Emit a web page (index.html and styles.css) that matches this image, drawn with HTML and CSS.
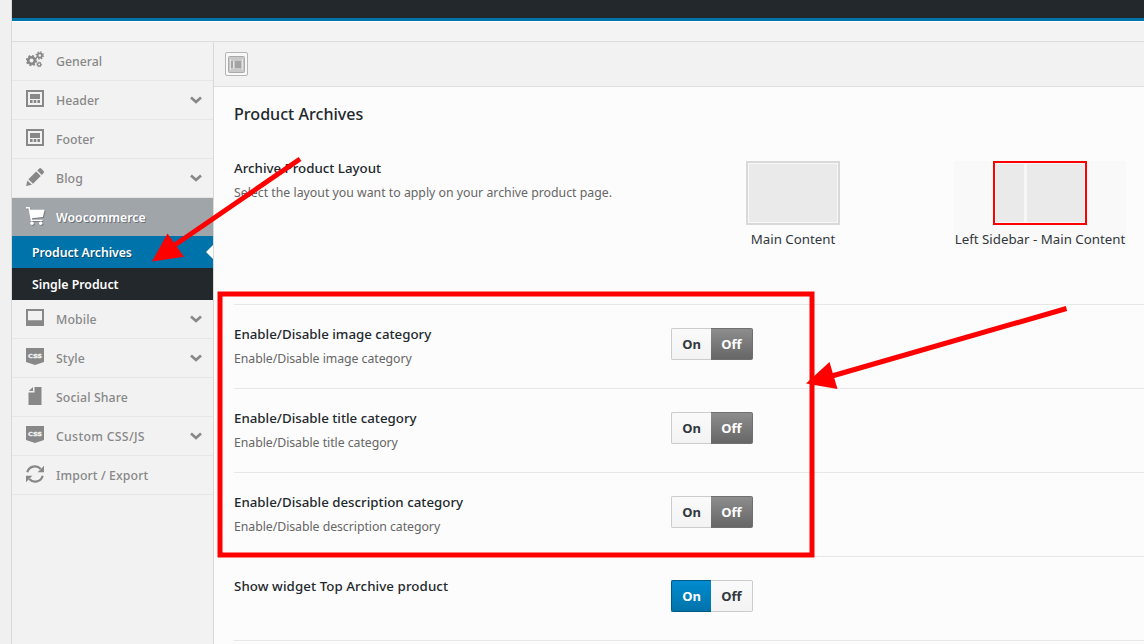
FILE: index.html
```html
<!DOCTYPE html>
<html lang="en">
<head>
<meta charset="utf-8">
<title>Theme Options</title>
<link rel="stylesheet" href="styles.css">
</head>
<body>
<svg class="defs" width="0" height="0" aria-hidden="true">
  <symbol id="i-gears" viewBox="0 0 18 18">
    <g fill="none" stroke="currentColor">
      <circle cx="5.5" cy="9.6" r="3.3" stroke-width="2.6"/>
      <circle cx="5.5" cy="9.6" r="4.8" stroke-width="1.8" stroke-dasharray="1.89 1.88"/>
      <circle cx="13.8" cy="4.500" r="2.200" stroke-width="1.800"/>
      <circle cx="13.8" cy="4.500" r="3.5" stroke-width="1.5" stroke-dasharray="1.38 1.37"/>
      <circle cx="13.2" cy="13.4" r="1.6" stroke-width="1.3"/>
      <circle cx="13.2" cy="13.4" r="2.4" stroke-width="1" stroke-dasharray=".95 .93"/>
    </g>
  </symbol>
  <symbol id="i-layout" viewBox="0 0 18 18">
    <path fill="currentColor" fill-rule="evenodd" d="M0 0h18v17H0zM2 2v13h14V2zM4 4h10v5H4zM4 10h2.6v3H4zM7.7 10h2.6v3H7.7zM11.4 10H14v3h-2.6z"/>
  </symbol>
  <symbol id="i-pencil" viewBox="0 0 18 18">
    <path fill="currentColor" d="M0 18l1.4-5.6 4.5 4.4zM2.400 11.200l7.800-7.800 4.600 4.600-7.800 7.800zM11.300 2.400L13.200.5q1-.8 2 0l2.400 2.400q.8 1 0 2l-1.800 2z"/>
  </symbol>
  <symbol id="i-cart" viewBox="0 0 20 19">
    <path fill="currentColor" d="M0 0h3.600l.9 2.800H18.600l-1.700 7.100L6 11.300l.3 1.400H16.500v1.400H4.900L2.500 1.500H0z"/>
    <circle cx="6" cy="16.300" r="1.700" fill="currentColor"/><circle cx="14.700" cy="16.300" r="1.700" fill="currentColor"/>
  </symbol>
  <symbol id="i-screen" viewBox="0 0 18 18">
    <path fill="currentColor" fill-rule="evenodd" d="M0 0h18v17H0zM2 2v9.300h14V2z"/>
  </symbol>
  <symbol id="i-file" viewBox="0 0 18 18">
    <path fill="currentColor" d="M8.500 0H15.500v18h-13V5.500h6zM7 0v4H2.800z"/>
  </symbol>
  <symbol id="i-refresh" viewBox="0 0 18 18">
    <g fill="none" stroke="currentColor" stroke-width="2.200"><path d="M1.300 7.200A7.800 7.800 0 0 1 14.700 4"/><path d="M16.700 10.800A7.800 7.800 0 0 1 3.300 14"/></g>
    <path fill="currentColor" d="M18 .8V7.300h-6.500l2.200-2zM0 17.200V10.700h6.500l-2.200 2z"/>
  </symbol>
  <symbol id="i-chevron" viewBox="0 0 12 8">
    <path fill="none" stroke="currentColor" stroke-width="2.700" d="M1 1.500l5 4.500 5-4.500"/>
  </symbol>
</svg>

<div class="page">
  <div class="gutter"></div>
  <div class="panel">
    <header class="topbar"></header>
    <div class="infobar"></div>
    <div class="columns">
      <nav class="sidebar">
        <a class="item"><svg class="icon"><use href="#i-gears"/></svg><span class="label tight">General</span></a>
        <a class="item"><svg class="icon"><use href="#i-layout"/></svg><span class="label tight">Header</span><svg class="chevron"><use href="#i-chevron"/></svg></a>
        <a class="item"><svg class="icon"><use href="#i-layout"/></svg><span class="label tight">Footer</span></a>
        <a class="item"><svg class="icon"><use href="#i-pencil"/></svg><span class="label">Blog</span><svg class="chevron"><use href="#i-chevron"/></svg></a>
        <a class="item current"><svg class="icon cart"><use href="#i-cart"/></svg><span class="label tight">Woocommerce</span></a>
        <a class="sub selected"><span class="tight">Product Archives</span></a>
        <a class="sub"><span>Single Product</span></a>
        <a class="item"><svg class="icon"><use href="#i-screen"/></svg><span class="label">Mobile</span><svg class="chevron"><use href="#i-chevron"/></svg></a>
        <a class="item"><svg class="icon" viewBox="0 0 18 18"><path fill="currentColor" d="M0 0h18v14l-9 3-9-3z"/><text class="css-mark" x="2" y="10" textLength="14" lengthAdjust="spacingAndGlyphs">CSS</text></svg><span class="label">Style</span><svg class="chevron"><use href="#i-chevron"/></svg></a>
        <a class="item"><svg class="icon"><use href="#i-file"/></svg><span class="label">Social Share</span></a>
        <a class="item"><svg class="icon" viewBox="0 0 18 18"><path fill="currentColor" d="M0 0h18v14l-9 3-9-3z"/><text class="css-mark" x="2" y="10" textLength="14" lengthAdjust="spacingAndGlyphs">CSS</text></svg><span class="label wide">Custom CSS/JS</span><svg class="chevron"><use href="#i-chevron"/></svg></a>
        <a class="item"><svg class="icon"><use href="#i-refresh"/></svg><span class="label">Import / Export</span></a>
      </nav>
      <main class="main">
        <div class="toolbar"><button class="expand"><svg width="17" height="17" viewBox="0 0 17 17"><rect x=".5" y=".5" width="16" height="16" rx="1" fill="#c9c9c9" stroke="#aaa"/><path fill="none" stroke="#e3e3e3" d="M2.500 3v11M14.500 3v11M5.500 5v8"/><path fill="#a3a3a3" d="M3 5h2v7H3zM7 5h6v7H7z"/></svg></button></div>
        <section class="content">
          <h2 class="heading">Product Archives</h2>
          <div class="row first">
            <div class="info"><div class="title">Archive Product Layout</div><div class="desc">Select the layout you want to apply on your archive product page.</div></div>
            <div class="choices">
              <div class="choice one"><div class="thumb"><i></i></div><span>Main Content</span></div>
              <div class="choice picked"><div class="thumb"><i class="side"></i><i></i></div><span>Left Sidebar - Main Content</span></div>
            </div>
          </div>
          <div class="row"><div class="info"><div class="title">Enable/Disable image category</div><div class="desc short">Enable/Disable image category</div></div><div class="switch"><span class="on">On</span><span class="off active">Off</span></div></div>
          <div class="row"><div class="info"><div class="title">Enable/Disable title category</div><div class="desc short">Enable/Disable title category</div></div><div class="switch"><span class="on">On</span><span class="off active">Off</span></div></div>
          <div class="row"><div class="info"><div class="title">Enable/Disable description category</div><div class="desc short">Enable/Disable description category</div></div><div class="switch"><span class="on">On</span><span class="off active">Off</span></div></div>
          <div class="row"><div class="info"><div class="title loose">Show widget Top Archive product</div></div><div class="switch"><span class="on active">On</span><span class="off">Off</span></div></div>
          <div class="row"></div>
        </section>
      </main>
    </div>
  </div>
</div>

<svg class="marks" width="1144" height="644" viewBox="0 0 1144 644">
  <rect x="220" y="294" width="592" height="261" fill="none" stroke="#f00" stroke-width="5"/>
  <g stroke="#f00" stroke-width="5"><path d="M300 159L174 245.500"/><path d="M1066.500 308.500L832 376"/></g>
  <path fill="#f00" d="M152 261.500l15.500-28 16.500 23.300zM806 383.500l23.500-21.500 8 27z"/>
</svg>
</body>
</html>
```
FILE: styles.css
```css
* { box-sizing: border-box; }
body { margin: 0; width: 1144px; height: 644px; overflow: hidden; background: #f0f0f0; font-family: "Noto Sans", "Open Sans", sans-serif; font-size: 12.3px; color: #32373c; }
.defs { position: absolute; }
.page { display: flex; height: 644px; overflow: hidden; }
.gutter { flex: 0 0 11px; background: #f0f0f0; }
.panel { flex: 1; min-width: 0; display: flex; flex-direction: column; border-left: 1px solid #d8d8d8; background: #f2f2f2; }
.topbar { height: 21px; flex: none; background: #23282d; border-bottom: 3px solid #0073aa; }
.infobar { height: 21px; flex: none; background: #f3f3f3; border-top: 1px solid #fff; border-bottom: 1px solid #dedede; }
.columns { display: flex; flex: 1; min-height: 0; }

.sidebar { flex: 0 0 201px; background: #f2f2f2; }
.item { display: flex; align-items: center; height: 39px; padding: 0 11px 0 14px; border-bottom: 1px solid #e6e6e6; color: #888; font-weight: 500; }
.icon { width: 18px; height: 18px; margin-right: 12px; margin-top: -2px; flex: none; }
.icon.cart { width: 20px; height: 19px; margin-right: 10px; overflow: visible; filter: drop-shadow(1px 1px 0 #777d82); }
.label { flex: 1; letter-spacing: .1px; }
.label.tight { letter-spacing: 0; }
.label.wide { letter-spacing: .3px; }
.sub .tight { letter-spacing: -.07px; }
.chevron { width: 12px; height: 8px; flex: none; }
.css-mark { font: bold 5.500px "DejaVu Sans", sans-serif; fill: #f4f4f4; stroke: #f4f4f4; stroke-width: .3px; }
.current { height: 38px; border-bottom: 0; background: #a0a5aa; color: #fff; font-weight: 600; text-shadow: 1px 1px 0 #6d7175; }
.sub { display: flex; align-items: center; justify-content: space-between; height: 32px; padding-left: 20px; background: #23282d; color: #fff; font-weight: 600; }
.selected { background: #0073aa; text-shadow: 1px 1px 0 #004b70; }
.selected::after { content: ""; border: 7px solid transparent; border-left-width: 0; border-right-color: #fcfcfc; }

.main { flex: 1; min-width: 0; border-left: 1px solid #d8d8d8; background: #fcfcfc; }
.toolbar { display: flex; align-items: flex-start; height: 45px; padding: 10px 11px; background: #f2f2f2; border-bottom: 1px solid #dedede; }
.expand { width: 23px; height: 24px; padding: 2px; border: 1px solid #b5b5b5; border-radius: 2px; background: #f8f8f8; line-height: 0; display: flex; align-items: center; justify-content: center; }
.content { padding-left: 20px; }
.heading { margin: 0; height: 54px; padding-top: 16px; font-size: 16.1px; line-height: 22px; font-weight: 500; color: #23282d; }
.row { display: flex; height: 84px; padding-top: 20px; border-top: 1px solid #e7e7e7; }
.row.first { height: 163px; border-top: 0; padding-top: 18px; }
.info { flex: 0 0 437px; white-space: nowrap; }
.title { height: 20px; line-height: 18px; font-size: 13.3px; font-weight: 500; color: #23282d; }
.title.loose { letter-spacing: .08px; }
.desc { margin-top: 4px; height: 20px; line-height: 20px; color: #666; }
.desc.short { letter-spacing: -.05px; }
.choices { display: flex; margin-top: 2px; padding-left: 75px; gap: 114px; }
.choice { display: flex; flex-direction: column; align-items: center; height: 87px; white-space: nowrap; }
.one { width: 94px; }
.picked { width: 172px; background: #f9f9f9; }
.thumb { flex: none; display: flex; gap: 3px; width: 94px; height: 64px; padding: 1px; border: 2px solid #d9d9d9; background: #f7f7f7; }
.thumb i { flex: 1; background: #eaeaea; }
.thumb .side { flex: 0 0 28px; }
.picked .thumb { border-color: #f00; }
.choice span { margin-top: 4px; font-size: 13.3px; line-height: 20px; }
.switch { display: flex; width: 82px; height: 32px; margin-top: 3px; font-size: 13px; font-weight: 700; line-height: 31px; text-align: center; color: #32373c; }
.switch span { border: 1px solid #ccc; background: linear-gradient(#fafafa, #f3f3f3); }
.on { width: 40px; border-radius: 2px 0 0 2px; border-right-width: 0 !important; }
.off { width: 42px; border-radius: 0 2px 2px 0; border-left-width: 0 !important; }
.switch .active { color: #fff; }
.switch .on.active { background: linear-gradient(#008bcf, #0073aa); border-color: #005a87; }
.switch .off.active { background: linear-gradient(#8d8d8d, #666); border-color: #707070; }
.marks { position: absolute; left: 0; top: 0; pointer-events: none; }
```
